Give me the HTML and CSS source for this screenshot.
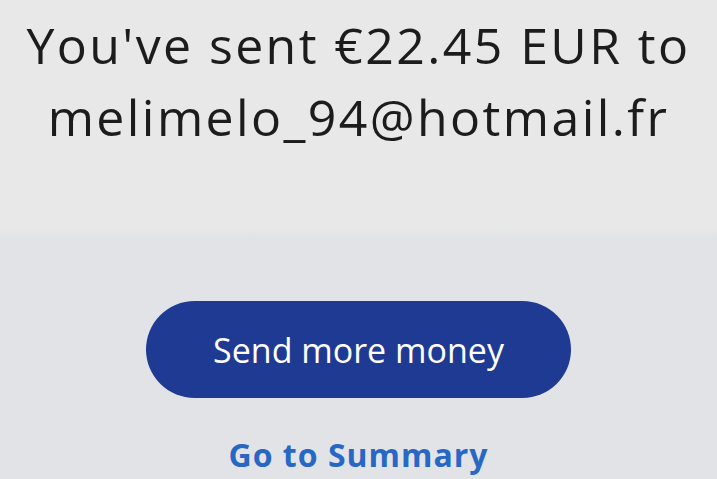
FILE: index.html
```html
<!DOCTYPE html>
<html lang="en">
<head>
    <meta charset="UTF-8">
    <meta name="viewport" content="width=device-width, initial-scale=1.0">
    <title>Payment sent</title>
    <link rel="stylesheet" href="styles.css">
</head>
<body>

    <div class="summary">
        <h1>You've sent €22.45 EUR to<br>melimelo_94@hotmail.fr</h1>
    </div>

    <div class="actions">
        <button class="primary">Send more money</button>
        <a href="#" class="link">Go to Summary</a>
    </div>

</body>
</html>
```

FILE: styles.css
```css
body {
    font-family: 'Open Sans', sans-serif;
    margin: 0;
    padding: 0;
    height: 100vh;
    overflow: hidden;
    background-color: #e2e3e7;
}

.summary {
    height: 236px;
    background: linear-gradient(to bottom, #e8e8e8 0, #e8e8e8 228px, #e2e3e7 240px);
    padding-top: 9px;
    box-sizing: border-box;
}

h1 {
    margin: 0;
    text-align: center;
    font-size: 50px;
    font-weight: 400;
    line-height: 72px;
    color: #1c1c1c;
    letter-spacing: 2.4px;
}

.actions {
    display: flex;
    flex-direction: column;
    align-items: center;
    padding-top: 65px;
}

.primary {
    width: 425px;
    height: 97px;
    border: none;
    border-radius: 49px;
    background-color: #1f3a93;
    color: #fff;
    font-family: 'Open Sans', sans-serif;
    font-size: 34px;
    cursor: pointer;
}

.link {
    margin-top: 35px;
    color: #2868c4;
    font-size: 32px;
    font-weight: 700;
    letter-spacing: 1px;
    text-decoration: none;
}
```
